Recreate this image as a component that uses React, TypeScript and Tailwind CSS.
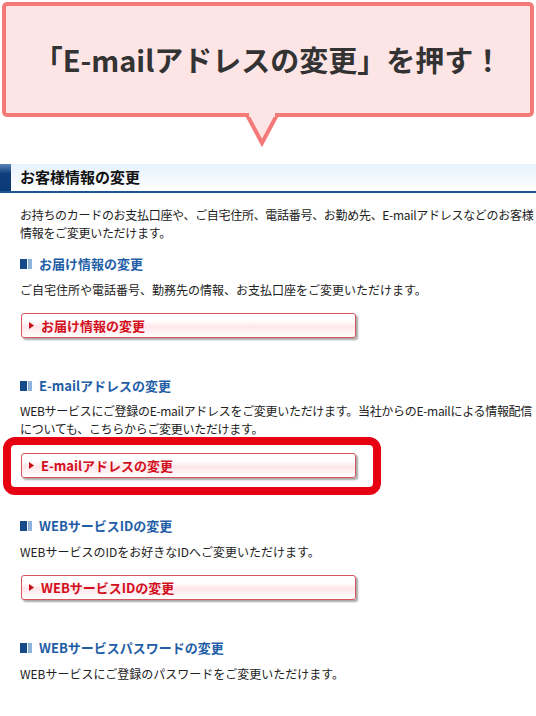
const jp = { fontFamily: '"Noto Sans CJK JP", "Noto Sans", sans-serif' }

function SubHeading({ children }: { children: React.ReactNode }) {
  return (
    <div className="flex items-center h-[18px] text-[13px] leading-[18px] font-bold text-[#1f5ea6]">
      <span className="flex h-[10px] w-[12px] mr-[7px]">
        <span className="w-[7px] h-full bg-[#174a8a]" />
        <span className="w-[1px] h-full bg-white" />
        <span className="w-[4px] h-full bg-[#8fb3da]" />
      </span>
      {children}
    </div>
  )
}

function LinkButton({ label }: { label: string }) {
  return (
    <div className="ml-[1px] w-[335px] h-[25px] flex items-center rounded-[3px] border border-[#d9535c] bg-[linear-gradient(to_bottom,#ffffff_0%,#ffffff_30%,#fde6ea_55%,#ffffff_100%)] shadow-[2px_2px_2px_rgba(0,0,0,0.35)]">
      <svg width="5" height="7" viewBox="0 0 5 7" className="ml-[7px] mr-[7px]">
        <polygon points="0,0 5,3.5 0,7" fill="#c8101b" />
      </svg>
      <span className="text-[13px] font-bold text-[#d20f1c] leading-none">{label}</span>
    </div>
  )
}

export default function App() {
  return (
    <div className="relative w-[536px] h-[716px] bg-white overflow-hidden" style={jp}>
      {/* Callout */}
      <div className="relative mx-[2px] mt-[2px] h-[115px] rounded-[5px] border-4 border-[#f47a7a] bg-[#fde4e5] flex items-center justify-center">
        <span className="text-[29px] font-bold text-[#333333]">「E-mailアドレスの変更」を押す！</span>
        <svg width="40" height="36" viewBox="0 0 40 36" className="absolute left-[236px] top-[107px]">
          <polygon points="4,0 20,30 36,0" fill="#fde4e5" stroke="#f47a7a" strokeWidth="4" strokeLinejoin="miter" />
          <rect x="7" y="0" width="26" height="4" fill="#fde4e5" />
        </svg>
      </div>

      {/* Section header */}
      <div className="mt-[47px] flex h-[29px] border-b-2 border-[#1d5694] bg-[linear-gradient(to_bottom,#e6f2fd,#ffffff)]">
        <div className="w-[11px] h-full bg-[linear-gradient(to_bottom,#5a86b8,#0f3e7c_35%,#0c3a76)]" />
        <div className="pl-[9px] flex items-center text-[15px] font-bold text-[#111111]">お客様情報の変更</div>
      </div>

      <div className="px-[20px] text-[12px] leading-[18px] text-[#222222]">
        <p className="mt-[13px] whitespace-nowrap tracking-[-0.3px]">
          お持ちのカードのお支払口座や、ご自宅住所、電話番号、お勤め先、E-mailアドレスなどのお客様
          <br />
          情報をご変更いただけます。
        </p>

        <div className="mt-[13px]">
          <SubHeading>お届け情報の変更</SubHeading>
        </div>
        <p className="mt-[8px]">ご自宅住所や電話番号、勤務先の情報、お支払口座をご変更いただけます。</p>
        <div className="mt-[14px]">
          <LinkButton label="お届け情報の変更" />
        </div>

        <div className="mt-[39px]">
          <SubHeading>E-mailアドレスの変更</SubHeading>
        </div>
        <p className="mt-[7px] whitespace-nowrap tracking-[-0.3px]">
          WEBサービスにご登録のE-mailアドレスをご変更いただけます。当社からのE-mailによる情報配信
          <br />
          についても、こちらからご変更いただけます。
        </p>
        <div className="relative mt-[15px]">
          <div className="absolute left-[-17px] top-[-16px] w-[378px] h-[58px] rounded-[12px] border-[8px] border-[#e60012]" />
          <LinkButton label="E-mailアドレスの変更" />
        </div>

        <div className="mt-[39px]">
          <SubHeading>WEBサービスIDの変更</SubHeading>
        </div>
        <p className="mt-[8px]">WEBサービスのIDをお好きなIDへご変更いただけます。</p>
        <div className="mt-[14px]">
          <LinkButton label="WEBサービスIDの変更" />
        </div>

        <div className="mt-[39px]">
          <SubHeading>WEBサービスパスワードの変更</SubHeading>
        </div>
        <p className="mt-[8px]">WEBサービスにご登録のパスワードをご変更いただけます。</p>
      </div>
    </div>
  )
}
